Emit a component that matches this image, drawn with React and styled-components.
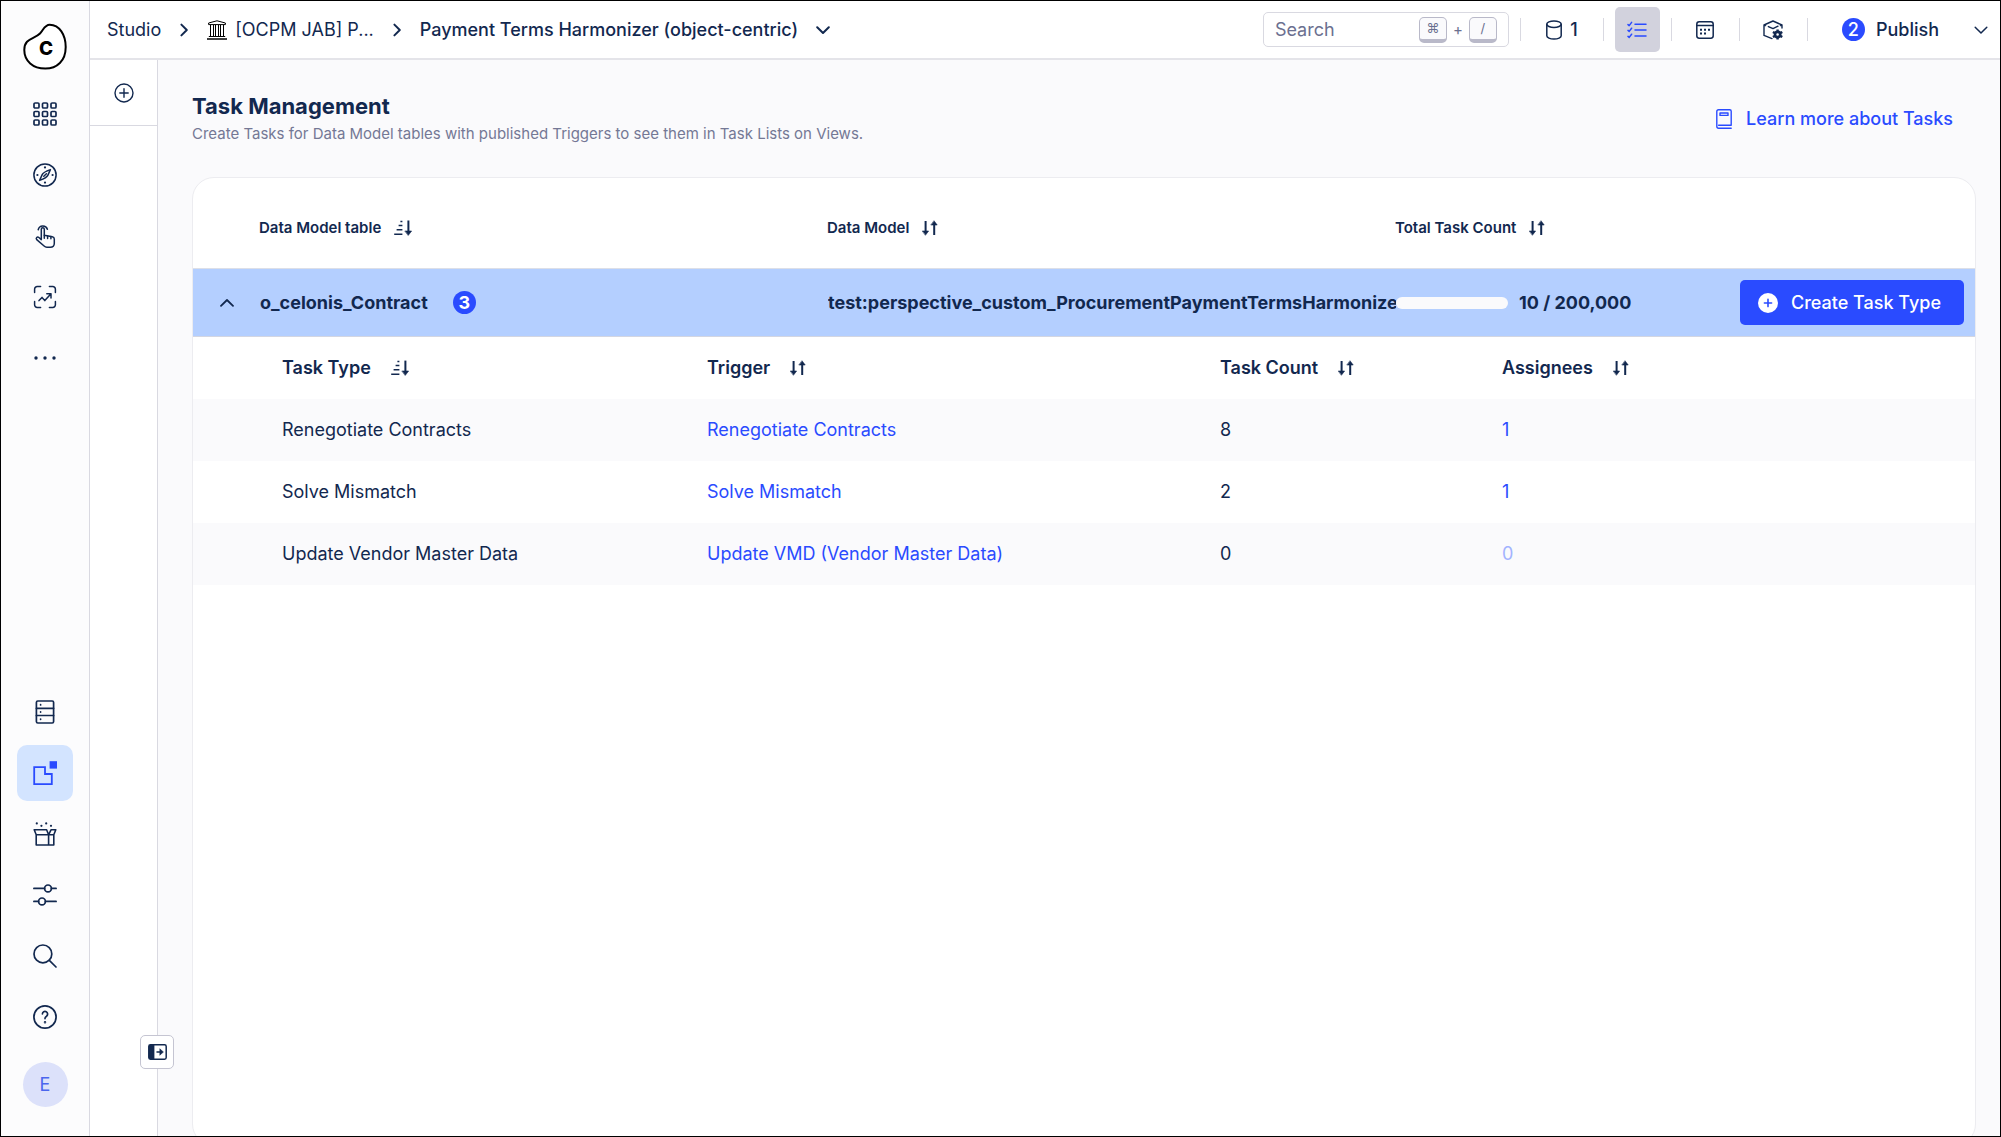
import React from 'react';
import styled, { createGlobalStyle } from 'styled-components';

const navy = '#12284f';
const blue = '#2a4bff';
const line = '#d9d9e1';

const GlobalStyle = createGlobalStyle`
  * {
    box-sizing: border-box;
  }
  body {
    margin: 0;
    font-family: Inter, "Liberation Sans", sans-serif;
    font-size: 18px;
    line-height: 24px;
    color: ${navy};
  }
  button,
  input,
  kbd {
    font: inherit;
    color: inherit;
  }
  button {
    padding: 0;
    border: none;
    background: none;
    cursor: pointer;
  }
  a {
    color: ${blue};
    text-decoration: none;
  }
  svg {
    display: block;
    flex: none;
  }
`;

const Page = styled.div`
  display: flex;
  height: 100vh;
  overflow: hidden;
  border: 1px solid #000000;
  background: #fafafc;
`;

/* ---------- sidebar ---------- */

const Sidebar = styled.nav`
  display: flex;
  flex-direction: column;
  align-items: center;
  width: 89px;
  flex: none;
  padding: 22px 0 29px;
  background: #fcfcfd;
  border-right: 1px solid ${line};
`;

const Logo = styled.a`
  margin-bottom: 16px;
`;

const NavGroup = styled.div`
  display: flex;
  flex-direction: column;
  gap: 5px;
`;

const NavButton = styled.button`
  display: grid;
  place-items: center;
  width: 56px;
  height: 56px;
  border-radius: 10px;
  color: ${(props) => (props.$active ? blue : navy)};
  background: ${(props) => (props.$active ? '#d3e4ff' : 'transparent')};
`;

const Spacer = styled.div`
  flex: 1;
`;

const Avatar = styled.button`
  width: 45px;
  height: 45px;
  margin-top: 17px;
  border-radius: 50%;
  background: #dce1fa;
  color: #4b66ee;
`;

/* ---------- top bar ---------- */

const Main = styled.div`
  display: flex;
  flex-direction: column;
  flex: 1;
  min-width: 0;
`;

const TopBar = styled.header`
  display: flex;
  align-items: center;
  height: 59px;
  flex: none;
  padding: 0 12px 0 17px;
  background: #ffffff;
  border-bottom: 2px solid #e4e4e9;
`;

const Breadcrumb = styled.nav`
  display: flex;
  align-items: center;
  gap: 17px;
  flex: 1;
  min-width: 0;
  white-space: nowrap;
`;

const Crumb = styled.a`
  display: flex;
  align-items: center;
  gap: 8px;
  color: ${navy};
`;

const CurrentCrumb = styled.button`
  display: flex;
  align-items: center;
  gap: 18px;
  font-weight: 500;
`;

const SearchBox = styled.label`
  display: flex;
  align-items: center;
  gap: 6px;
  width: 246px;
  height: 35px;
  padding: 0 11px;
  border: 1px solid ${line};
  border-radius: 5px;
  color: #6b7090;
`;

const SearchInput = styled.input`
  flex: 1;
  min-width: 0;
  padding: 0;
  border: none;
  outline: none;
  background: none;
  &::placeholder {
    color: #6b7090;
    opacity: 1;
  }
`;

const Key = styled.kbd`
  width: 28px;
  height: 26px;
  border: 1px solid #b9b9c9;
  border-bottom-width: 4px;
  border-radius: 5px;
  background: #fafafc;
  font-size: 13px;
  line-height: 20px;
  text-align: center;
`;

const Plus = styled.span`
  font-size: 15px;
`;

const Divider = styled.span`
  width: 1px;
  height: 23px;
  margin: 0 11px;
  background: ${line};
`;

const ToolButton = styled.button`
  display: flex;
  align-items: center;
  justify-content: center;
  gap: 8px;
  width: ${(props) => (props.$wide ? '60px' : '45px')};
  height: 45px;
  border-radius: 5px;
  font-weight: 500;
  color: ${(props) => (props.$active ? blue : navy)};
  background: ${(props) => (props.$active ? '#d2d2dd' : 'transparent')};
`;

const PublishButton = styled.button`
  display: flex;
  align-items: center;
  gap: 11px;
  padding: 0 35px 0 23px;
  font-weight: 500;
`;

const Badge = styled.span`
  display: grid;
  place-items: center;
  width: 23px;
  height: 23px;
  border-radius: 50%;
  background: ${blue};
  color: #ffffff;
`;

/* ---------- content ---------- */

const Body = styled.div`
  display: flex;
  flex: 1;
  min-height: 0;
`;

const Panel = styled.aside`
  position: relative;
  width: 68px;
  flex: none;
  background: #ffffff;
  border-right: 1px solid ${line};
`;

const AddButton = styled.button`
  display: grid;
  place-items: center;
  width: 100%;
  height: 66px;
  border-bottom: 1px solid ${line};
`;

const ExpandButton = styled.button`
  position: absolute;
  right: -17px;
  bottom: 67px;
  display: grid;
  place-items: center;
  width: 34px;
  height: 34px;
  border: 1px solid #c5c5d2;
  border-radius: 5px;
  background: #ffffff;
`;

const Content = styled.main`
  display: flex;
  flex-direction: column;
  flex: 1;
  min-width: 0;
  padding: 31px 24px 0 34px;
`;

const PageHead = styled.div`
  display: flex;
  justify-content: space-between;
  padding-right: 23px;
  margin-bottom: 31px;
`;

const Title = styled.h1`
  margin: 0;
  font-size: 22px;
  line-height: 31px;
  font-weight: 700;
`;

const Subtitle = styled.p`
  margin: 0;
  font-size: 15px;
  line-height: 24px;
  color: #747895;
`;

const LearnMore = styled.a`
  display: flex;
  align-items: center;
  gap: 14px;
  font-weight: 500;
`;

const Card = styled.section`
  flex: 1;
  margin-bottom: -10px;
  overflow: hidden;
  background: #ffffff;
  border: 1px solid #ececf0;
  border-radius: 22px;
`;

const Table = styled.table`
  display: block;
  thead,
  tbody {
    display: block;
  }
  th,
  td {
    padding: 0;
    text-align: left;
  }
`;

const ModelHeadRow = styled.tr`
  display: grid;
  grid-template-columns: 66px repeat(3, minmax(0, 1fr));
  align-items: center;
  height: 90px;
  padding: 10px 12px 0 0;
`;

const ModelRow = styled.tr`
  display: grid;
  grid-template-columns: 66px repeat(3, minmax(0, 1fr));
  align-items: center;
  height: 69px;
  padding: 0 11px 0 1px;
  font-weight: 700;
  background: #b4cfff;
  border-top: 1px solid #dcdfe8;
  border-bottom: 1px solid #d3d6e2;
`;

const DetailRow = styled.tr`
  display: block;
`;

const DetailCell = styled.td`
  display: block;
`;

const TaskRow = styled.tr`
  display: grid;
  grid-template-columns: 425fr 513fr 282fr 473fr;
  align-items: center;
  height: 62px;
  padding-left: 89px;
  background: ${(props) => (props.$striped ? '#fafafc' : '#ffffff')};
`;

const HeadCell = styled.th`
  font-size: ${(props) => (props.$small ? '15px' : '18px')};
  font-weight: 600;
`;

const SortButton = styled.button`
  display: flex;
  align-items: center;
  gap: ${(props) => (props.$small ? '13px' : '20px')};
`;

const ToggleButton = styled.button`
  display: grid;
  place-items: center;
  width: 66px;
  height: 45px;
`;

const ModelName = styled.div`
  display: flex;
  align-items: center;
  gap: 25px;
  overflow: hidden;
  white-space: nowrap;
`;

const CountCell = styled.div`
  display: flex;
  align-items: center;
  justify-content: space-between;
`;

const Count = styled.label`
  display: flex;
  align-items: center;
  gap: 11px;
`;

const Progress = styled.progress`
  appearance: none;
  width: 112px;
  height: 12px;
  border: none;
  border-radius: 6px;
  overflow: hidden;
  &::-webkit-progress-bar {
    background: #fafafc;
  }
  &::-webkit-progress-value {
    background: ${blue};
  }
`;

const CreateButton = styled.button`
  display: flex;
  align-items: center;
  gap: 13px;
  height: 45px;
  padding: 0 23px 0 18px;
  border-radius: 5px;
  background: ${blue};
  color: #ffffff;
  font-weight: 500;
`;

const Assignees = styled.a`
  color: ${(props) => (props.$empty ? '#a3b3ff' : blue)};
`;

/* ---------- icons ---------- */

function Icon({ w = 24, h = 24, sw = 1.6, children }) {
  return (
    <svg
      width={w}
      height={h}
      viewBox={`0 0 ${w} ${h}`}
      fill="none"
      stroke="currentColor"
      strokeWidth={sw}
      strokeLinecap="round"
      strokeLinejoin="round"
      aria-hidden="true"
    >
      {children}
    </svg>
  );
}

const LogoMark = () => (
  <svg width="44" height="47" viewBox="0 0 44 47" aria-hidden="true">
    <path
      d="M26.7 1.7C36.5 1.7 42.7 12 42.7 24C42.7 38 34 45.6 22.3 45.6C10 45.6 1.3 38 1.3 27C1.3 15 11 16.5 17 10.5C20.5 7 21.5 1.7 26.7 1.7Z"
      fill="#ffffff"
      stroke="#000000"
      strokeWidth="2"
    />
    <text x="23" y="32" textAnchor="middle" fontSize="19" fontWeight="800" fill="#000000">C</text>
  </svg>
);

const GridIcon = () => (
  <Icon sw={1.7}>
    {[1, 9.5, 18].map((y) =>
      [1, 9.5, 18].map((x) => <rect key={`${x}-${y}`} x={x} y={y} width="5" height="5" rx="1.1" />)
    )}
  </Icon>
);

const CompassIcon = () => (
  <Icon sw={1.5}>
    <circle cx="12" cy="12" r="11.1" />
    <path d="M17.4 6.6C13.5 8 10 9.8 9.2 11.6L6.6 17.4C10.5 16 14 14.2 14.8 12.4ZM10.8 13.2L13.4 10.8" />
    <g fill="currentColor" stroke="none">
      <circle cx="12" cy="4.4" r="1.1" />
      <circle cx="12" cy="19.6" r="1.1" />
      <circle cx="4.4" cy="12" r="1.1" />
      <circle cx="19.6" cy="12" r="1.1" />
    </g>
  </Icon>
);

const TouchIcon = () => (
  <Icon sw={1.5}>
    <path d="M8.3 15.6V5.3a1.5 1.5 0 0 1 3 0v6l8 1.4c1.3.2 2 1 2 2.2v4.3c0 2.5-1.5 4-4 4h-3.4c-1.2 0-2-.4-2.8-1.2L3.7 15.6c-1.3-1.6.6-3.3 2.2-2.1z" />
    <path d="M11.3 11.3v3M14.6 12v2.4M17.9 12.6v2.2" />
    <path d="M5.2 5.7a4.8 4.8 0 0 1 9.2-.4" />
  </Icon>
);

const ScanIcon = () => (
  <Icon sw={1.5}>
    <path d="M1.6 7.6V4.2a2.6 2.6 0 0 1 2.6-2.6h3.4M16.4 1.6h3.4a2.6 2.6 0 0 1 2.6 2.6v3.4M22.4 16.4v3.4a2.6 2.6 0 0 1-2.6 2.6h-3.4M7.6 22.4H4.2a2.6 2.6 0 0 1-2.6-2.6v-3.4" />
    <path d="M6 15.6l3-3.2 2.8 3.2 6-6.6M13.8 8.8h4.2V13" />
  </Icon>
);

const MoreIcon = () => (
  <Icon>
    <g fill="currentColor" stroke="none">
      <circle cx="3" cy="12" r="1.7" />
      <circle cx="12" cy="12" r="1.7" />
      <circle cx="21" cy="12" r="1.7" />
    </g>
  </Icon>
);

const ServerIcon = () => (
  <Icon sw={1.7}>
    <rect x="3.4" y="1" width="17.2" height="22" rx="1.4" />
    <path d="M3.4 8.3h17.2M3.4 15.5h17.2" />
    <path d="M7.6 4.7v.2M7.6 11.9v.2M7.6 19.1v.2" />
  </Icon>
);

const StudioIcon = () => (
  <Icon sw={1.8}>
    <path d="M1.2 6.2H12V13H18.8V23.2H1.2Z" strokeLinejoin="miter" />
    <rect x="16.6" y=".2" width="7.4" height="7.4" fill="currentColor" stroke="none" />
  </Icon>
);

const BoxIcon = () => (
  <Icon sw={1.6}>
    <path d="M3.2 12.8V23H20.8V12.8M15.6 12.8V23M1.2 7.8H13.6L15.6 12.8H3.2ZM18 7.8H22.8L20.8 12.8H15.6Z" />
    <g fill="currentColor" stroke="none">
      <circle cx="3.8" cy="1.4" r="1.1" />
      <circle cx="8.4" cy="3.8" r="1.1" />
      <circle cx="13.2" cy="1.4" r="1.1" />
      <circle cx="18" cy="3.8" r="1.1" />
    </g>
  </Icon>
);

const SlidersIcon = () => (
  <Icon sw={1.7}>
    <circle cx="15" cy="5.4" r="3.4" />
    <circle cx="9" cy="18.4" r="3.4" />
    <path d="M.9 5.4h10.7M18.4 5.4h4.7M.9 18.4h4.7M12.4 18.4h10.7" />
  </Icon>
);

const SearchIcon = () => (
  <Icon sw={1.7}>
    <circle cx="9.9" cy="9.9" r="8.9" />
    <path d="M16.3 16.3L23 23" />
  </Icon>
);

const HelpIcon = () => (
  <Icon sw={1.7}>
    <circle cx="12" cy="12" r="11.1" />
    <path d="M9.4 9a2.6 2.6 0 1 1 4.1 2.2c-.9.6-1.5 1.2-1.5 2.4" />
    <circle cx="12" cy="17.2" r=".4" fill="currentColor" />
  </Icon>
);

const ChevronRight = () => (
  <Icon w={12} h={16} sw={2}>
    <path d="M3.4 2.6L8.8 8L3.4 13.4" />
  </Icon>
);

const ChevronDown = ({ sw = 1.8 }) => (
  <Icon w={14} h={14} sw={sw}>
    <path d="M1.2 4.2L7 10L12.8 4.2" />
  </Icon>
);

const ChevronUp = () => (
  <Icon w={14} h={14} sw={1.8}>
    <path d="M1 9.8L7 4L13 9.8" />
  </Icon>
);

const BankIcon = () => (
  <svg width="20" height="20" viewBox="0 0 20 20" fill="none" stroke="#000000" strokeWidth="1" aria-hidden="true">
    <path d="M1.6 4.6V3L10 .8L18.4 3V4.6ZM3.5 5V16M6.5 5V16M8.5 5V16M11.5 5V16M13.5 5V16M16.5 5V16M1.8 16.5H18.2" />
    <path d="M0 19H20" strokeWidth="1.5" />
  </svg>
);

const DatabaseIcon = () => (
  <Icon w={16} h={20} sw={1.5}>
    <ellipse cx="8" cy="4.2" rx="7.2" ry="3.2" />
    <path d="M.8 4.2v11.6c0 1.8 3.2 3.2 7.2 3.2s7.2-1.4 7.2-3.2V4.2" />
  </Icon>
);

const ChecklistIcon = () => (
  <Icon w={20} h={20} sw={1.5}>
    <path d="M8 4.2h11M8 10h11M8 16h11" />
    <path d="M1 4.6l1.2 1L4.6 2.4M1 10.4l1.2 1L4.6 8.2M1 16.4l1.2 1L4.6 14.2" />
  </Icon>
);

const CalendarIcon = () => (
  <Icon w={20} h={20} sw={1.5}>
    <rect x="1.8" y="1.8" width="16.4" height="16.4" rx="2.4" />
    <path d="M1.8 5.6h16.4" />
    <g fill="currentColor" stroke="none">
      <path d="M5 8.8h2v2H5zM9 8.8h2v2H9zM13 8.8h2v2h-2zM5 12.6h2v2H5zM9 12.6h2v2H9z" />
    </g>
  </Icon>
);

const PackageIcon = () => (
  <Icon w={20} h={20} sw={1.4}>
    <path d="M9 18.6L1 15.4V5L10 1L19 5V8M5.4 6.6L10 8.6L15 6.2M1 5l1.6.6M19 5l-1.6.6" />
    <path
      d="M14.6 9.6v9.8M9.9 12l9.4 5M19.3 12l-9.4 5"
      strokeWidth="2.4"
      strokeLinecap="butt"
    />
    <circle cx="14.6" cy="14.5" r="2.6" strokeWidth="2.6" fill="#ffffff" />
  </Icon>
);

const BookIcon = () => (
  <Icon w={16} h={20} sw={1.4}>
    <path d="M15.2 16.2V2.2C15.2 1.4 14.6.8 13.8.8H2.6C1.6.8.8 1.6.8 2.6v14.6c0 1.1.8 2 1.8 2h12.6M2.6 16.2h12.6" />
    <rect x="4" y="4" width="8" height="2.4" />
  </Icon>
);

const AddCircleIcon = () => (
  <Icon w={20} h={20} sw={1.4}>
    <circle cx="10" cy="10" r="9" />
    <path d="M10 5.8v8.4M5.8 10h8.4" />
  </Icon>
);

const AddFilledIcon = () => (
  <Icon w={20} h={20} sw={1.6}>
    <circle cx="10" cy="10" r="10" fill="#ffffff" stroke="none" />
    <path d="M10 6.4v7.2M6.4 10h7.2" stroke={blue} />
  </Icon>
);

const ExpandIcon = () => (
  <Icon w={19} h={16} sw={1.5}>
    <rect x=".8" y=".8" width="17.4" height="14.4" rx="1.6" />
    <path d="M1 1h5.4v14H1z" fill="currentColor" stroke="none" />
    <path d="M9 8h4" />
    <path d="M12 5l3.4 3L12 11z" fill="currentColor" strokeWidth=".6" />
  </Icon>
);

const SortAscIcon = () => (
  <Icon w={19} h={16} sw={1.5}>
    <g strokeLinecap="butt">
      <path d="M6.4 1.4h2M4.6 5.6h3.8M2.6 9.8h5.8M.2 14.2h8.2" />
      <path d="M14.4.6v12" strokeWidth="2" />
    </g>
    <path d="M11.2 11h6.4L14.4 15.2z" fill="currentColor" strokeWidth=".6" />
  </Icon>
);

const SortIcon = () => (
  <Icon w={16} h={16} sw={2}>
    <path d="M3.6 1v11M12.2 5v10" strokeLinecap="butt" />
    <path d="M.6 11h6L3.6 15zM9.2 5h6L12.2 1z" fill="currentColor" strokeWidth=".6" />
  </Icon>
);

const topNav = [
  { label: 'Apps', icon: GridIcon },
  { label: 'Explore', icon: CompassIcon },
  { label: 'Actions', icon: TouchIcon },
  { label: 'Insights', icon: ScanIcon },
  { label: 'More', icon: MoreIcon },
];

const bottomNav = [
  { label: 'Data', icon: ServerIcon },
  { label: 'Studio', icon: StudioIcon, active: true },
  { label: 'Marketplace', icon: BoxIcon },
  { label: 'Settings', icon: SlidersIcon },
  { label: 'Search', icon: SearchIcon },
  { label: 'Help', icon: HelpIcon },
];

const tasks = [
  { type: 'Renegotiate Contracts', trigger: 'Renegotiate Contracts', count: 8, assignees: 1 },
  { type: 'Solve Mismatch', trigger: 'Solve Mismatch', count: 2, assignees: 1 },
  { type: 'Update Vendor Master Data', trigger: 'Update VMD (Vendor Master Data)', count: 0, assignees: 0 },
];

function NavItems({ items }) {
  return (
    <NavGroup>
      {items.map(({ label, icon: NavIcon, active }) => (
        <NavButton key={label} $active={active} aria-label={label}>
          <NavIcon />
        </NavButton>
      ))}
    </NavGroup>
  );
}

function SortHead({ label, sorted, small }) {
  return (
    <HeadCell $small={small}>
      <SortButton $small={small}>
        {label}
        {sorted ? <SortAscIcon /> : <SortIcon />}
      </SortButton>
    </HeadCell>
  );
}

function TaskTable() {
  return (
    <Table>
      <thead>
        <TaskRow>
          <SortHead label="Task Type" sorted />
          <SortHead label="Trigger" />
          <SortHead label="Task Count" />
          <SortHead label="Assignees" />
        </TaskRow>
      </thead>
      <tbody>
        {tasks.map((task, i) => (
          <TaskRow key={task.type} $striped={i % 2 === 0}>
            <td>{task.type}</td>
            <td><a href="#trigger">{task.trigger}</a></td>
            <td>{task.count}</td>
            <td><Assignees href="#assignees" $empty={task.assignees === 0}>{task.assignees}</Assignees></td>
          </TaskRow>
        ))}
      </tbody>
    </Table>
  );
}

function App() {
  return (
    <>
      <GlobalStyle />
      <Page>
        <Sidebar>
          <Logo href="#home" aria-label="Home"><LogoMark /></Logo>
          <NavItems items={topNav} />
          <Spacer />
          <NavItems items={bottomNav} />
          <Avatar>E</Avatar>
        </Sidebar>
        <Main>
          <TopBar>
            <Breadcrumb>
              <Crumb href="#studio">Studio</Crumb>
              <ChevronRight />
              <Crumb href="#package"><BankIcon />[OCPM JAB] P...</Crumb>
              <ChevronRight />
              <CurrentCrumb>Payment Terms Harmonizer (object-centric)<ChevronDown sw={2} /></CurrentCrumb>
            </Breadcrumb>
            <SearchBox>
              <SearchInput type="text" placeholder="Search" aria-label="Search" />
              <Key>⌘</Key>
              <Plus>+</Plus>
              <Key>/</Key>
            </SearchBox>
            <Divider />
            <ToolButton $wide><DatabaseIcon />1</ToolButton>
            <Divider />
            <ToolButton $active aria-label="Tasks"><ChecklistIcon /></ToolButton>
            <Divider />
            <ToolButton aria-label="Schedules"><CalendarIcon /></ToolButton>
            <Divider />
            <ToolButton aria-label="Package settings"><PackageIcon /></ToolButton>
            <Divider />
            <PublishButton><Badge>2</Badge>Publish</PublishButton>
            <button aria-label="Publish options"><ChevronDown sw={1.5} /></button>
          </TopBar>
          <Body>
            <Panel>
              <AddButton aria-label="Add"><AddCircleIcon /></AddButton>
              <ExpandButton aria-label="Expand panel"><ExpandIcon /></ExpandButton>
            </Panel>
            <Content>
              <PageHead>
                <div>
                  <Title>Task Management</Title>
                  <Subtitle>Create Tasks for Data Model tables with published Triggers to see them in Task Lists on Views.</Subtitle>
                </div>
                <LearnMore href="#learn"><BookIcon />Learn more about Tasks</LearnMore>
              </PageHead>
              <Card>
                <Table>
                  <thead>
                    <ModelHeadRow>
                      <td />
                      <SortHead label="Data Model table" sorted small />
                      <SortHead label="Data Model" small />
                      <SortHead label="Total Task Count" small />
                    </ModelHeadRow>
                  </thead>
                  <tbody>
                    <ModelRow>
                      <td><ToggleButton aria-label="Collapse"><ChevronUp /></ToggleButton></td>
                      <td><ModelName>o_celonis_Contract<Badge>3</Badge></ModelName></td>
                      <td><ModelName>test:perspective_custom_ProcurementPaymentTermsHarmonizer</ModelName></td>
                      <td>
                        <CountCell>
                          <Count><Progress value={10} max={200000} />10 / 200,000</Count>
                          <CreateButton><AddFilledIcon />Create Task Type</CreateButton>
                        </CountCell>
                      </td>
                    </ModelRow>
                    <DetailRow>
                      <DetailCell colSpan={4}><TaskTable /></DetailCell>
                    </DetailRow>
                  </tbody>
                </Table>
              </Card>
            </Content>
          </Body>
        </Main>
      </Page>
    </>
  );
}

export default App;
